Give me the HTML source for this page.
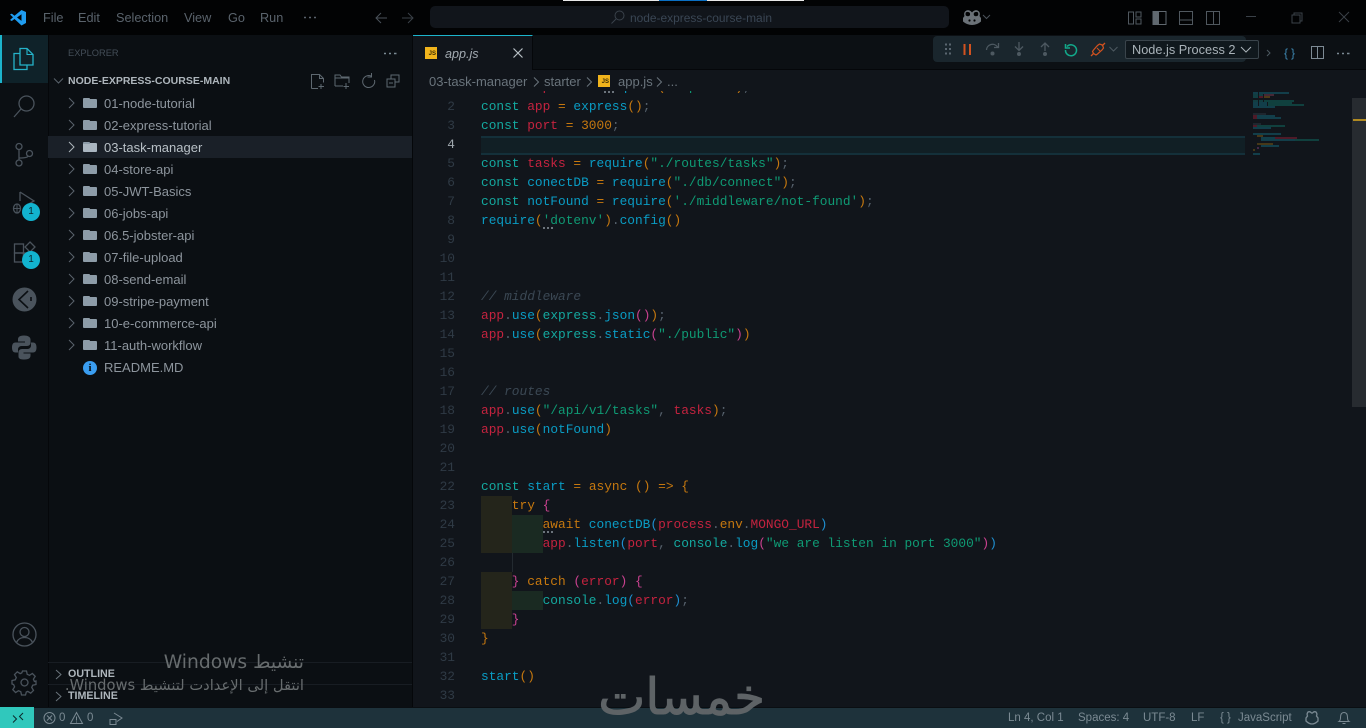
<!DOCTYPE html>
<html><head><meta charset="utf-8"><title>app.js</title>
<style>
*{margin:0;padding:0;box-sizing:border-box}
html,body{width:1366px;height:728px;overflow:hidden;background:#11151b;font-family:"Liberation Sans",sans-serif}
.a{position:absolute}
svg{position:absolute;overflow:visible;fill:none}
.tree{position:absolute;left:104px;font-size:13px;color:#8d959d;line-height:22px;height:22px;white-space:nowrap;margin-top:1px}
.fold{position:absolute;left:83px;width:14px;height:9px;background:#8d9ca8;border-radius:1px}
.fold:before{content:"";position:absolute;left:0;top:-1px;width:7px;height:2px;background:#8d9ca8;border-radius:1px 1px 0 0}
.ln{position:absolute;width:28px;left:427px;text-align:right;font:12.83px/19px "Liberation Mono",monospace;color:#2f3a45}
.c{position:absolute;left:481px;font:12.83px/19px "Liberation Mono",monospace;white-space:pre;color:#5a6570}
.k{color:#14a89f}.v{color:#c4233f}.f{color:#0a9cc4}.s{color:#0f9a74}.o{color:#c6780f}.m{color:#3b4854;font-style:italic}.p{color:#c9418f}.d{color:#56616c}.b{color:#1f8fd0}
.menu{position:absolute;top:10px;font-size:12.7px;color:#5a636c;line-height:16px}
.st{position:absolute;top:711px;font-size:11.5px;line-height:14px;color:#7b8a93;white-space:nowrap}
</style></head><body>
<!-- title bar -->
<div class="a" style="left:0;top:0;width:1366px;height:35px;background:#020304"></div>
<div class="a" style="left:563px;top:0;width:241px;height:1px;background:#e8e8e8"></div>
<div class="a" style="left:659px;top:0;width:48px;height:1px;background:#0a6fc2"></div>
<svg style="left:10px;top:9px" width="16" height="17" viewBox="0 0 16 17"><path d="M11.5 1L16 3v11l-4.500 2.500L4.500 10 1.800 12 0 11l3-2.700L0 5.500 1.800 4.600 4.500 6.800z" fill="#1f9cf0"/><path d="M11.500 5.200L7 8.500l4.500 3.400z" fill="#020304"/></svg>
<div class="menu" style="left:43px">File</div><div class="menu" style="left:78px">Edit</div><div class="menu" style="left:116px">Selection</div><div class="menu" style="left:184px">View</div><div class="menu" style="left:228px">Go</div><div class="menu" style="left:260px">Run</div>
<svg style="left:303px;top:16px" width="14" height="3"><path d="M1 1.500h2M6 1.500h2M11 1.500h2" stroke="#5a636c" stroke-width="1.400"/></svg>
<svg style="left:375px;top:11px" width="36" height="14" fill="none"><path d="M12 7H1M6 2L1 7l5 5" stroke="#4a525a"/><path d="M27 7h11M33 2l5 5-5 5" stroke="#3a4148"/></svg>
<div class="a" style="left:430px;top:6px;width:519px;height:22px;background:#11151b;border-radius:5px"></div>
<svg style="left:611px;top:10px" width="15" height="15"><circle cx="8.500" cy="5.500" r="4.500" stroke="#3a424b"/><path d="M5 9l-4.500 4.500" stroke="#3a424b"/></svg>
<div class="a" style="left:630px;top:10px;font-size:11.95px;line-height:16px;color:#3a4654">node-express-course-main</div>
<svg style="left:962px;top:9px" width="30" height="18"><path d="M3 2.500Q5.500 0 8.500 2q1 .7 1.500 1.500Q10.500 2.700 11.500 2q3-2 5.500.5 1.500 2 .5 4.500l1.500 2v3.500q-4 3.500-9 3.500t-9-3.500V9l1.500-2Q1.500 4.500 3 2.500z" fill="#6b7278"/><path d="M3.800 3.500q2-1.300 4 .3.700 1.700-.3 3-2 1-3.700-.3-.7-1.500 0-3zM12 3.800q2-1.600 4-.3.700 1.500 0 3-1.700 1.300-3.700.3-1-1.300-.3-3z" fill="#020304"/><circle cx="7.500" cy="11.500" r="1.100" fill="#020304"/><circle cx="12.500" cy="11.500" r="1.100" fill="#020304"/><path d="M21 6l3.500 3.500L28 6" stroke="#4a525a"/></svg>
<svg style="left:1128px;top:10px" width="78" height="16"><rect x=".5" y="2" width="5" height="12" stroke="#50585f"/><rect x="8" y="2" width="5" height="5" stroke="#50585f"/><rect x="8" y="9" width="5" height="5" stroke="#50585f"/>
<rect x="25" y="1.500" width="13" height="13" stroke="#60686f"/><rect x="25" y="1.500" width="6" height="13" fill="#60686f"/>
<rect x="51.500" y="1.500" width="13" height="13" stroke="#50585f"/><path d="M51.500 10h13" stroke="#50585f"/></svg>
<svg style="left:1206px;top:10px" width="15" height="16"><rect x=".5" y="1.500" width="13" height="13" stroke="#50585f"/><path d="M7.500 1.500v13" stroke="#50585f"/></svg>
<svg style="left:1246px;top:10px" width="110" height="16"><path d="M0 6.500h10" stroke="#3a4148"/><rect x="46" y="5" width="8" height="8" stroke="#3a4148"/><path d="M48 5V3h8v8h-2" stroke="#3a4148"/><path d="M93 2l10 10M103 2L93 12" stroke="#3a4148"/></svg>

<!-- activity bar -->
<div class="a" style="left:0;top:35px;width:48px;height:672px;background:#0b0f13"></div>
<div class="a" style="left:0;top:35px;width:48px;height:48px;background:#0f2229"></div>
<div class="a" style="left:0;top:35px;width:2px;height:48px;background:#1cb4cc"></div>
<svg style="left:13px;top:47px" width="22" height="25"><path d="M7 1.500h7l6 6v10.500H7z" stroke="#25b3c9" stroke-width="1.300"/><path d="M14 1.500v6h6" stroke="#25b3c9" stroke-width="1.100"/><path d="M7 6.500H1v16h13V18" stroke="#25b3c9" stroke-width="1.300"/></svg>
<svg style="left:13px;top:94px" width="23" height="25"><circle cx="13.500" cy="9.500" r="7.500" stroke="#4a535c" stroke-width="1.300"/><path d="M8 15L1 23" stroke="#4a535c" stroke-width="1.300"/></svg>
<svg style="left:14px;top:142px" width="21" height="25"><circle cx="5" cy="4.500" r="3" stroke="#4a535c" stroke-width="1.300"/><circle cx="5" cy="21" r="3" stroke="#4a535c" stroke-width="1.300"/><circle cx="15.500" cy="11.500" r="3" stroke="#4a535c" stroke-width="1.300"/><path d="M5 7.500V18M5 16q9 0 9-2" stroke="#4a535c" stroke-width="1.300"/></svg>
<svg style="left:12px;top:190px" width="26" height="26"><path d="M8 2v9M8 2l14 9-7 4" stroke="#4a535c" stroke-width="1.300"/><ellipse cx="5" cy="18.500" rx="3.500" ry="4.500" stroke="#4a535c" stroke-width="1.300"/><path d="M1.500 18.500h7M5 14v9" stroke="#4a535c"/></svg>
<div class="a" style="left:22px;top:203px;width:18px;height:18px;border-radius:50%;background:#12b3cf;color:#08262e;font-size:10px;line-height:18px;text-align:center">1</div>
<svg style="left:14px;top:241px" width="24" height="22"><rect x=".5" y="3" width="9" height="9" stroke="#4a535c" stroke-width="1.300"/><rect x=".5" y="12" width="9" height="9" stroke="#4a535c" stroke-width="1.300"/><rect x="9.500" y="12" width="9" height="9" stroke="#4a535c" stroke-width="1.300"/><path d="M16 1l5 5-5 5-5-5z" stroke="#4a535c" stroke-width="1.300"/></svg>
<div class="a" style="left:22px;top:251px;width:18px;height:18px;border-radius:50%;background:#12b3cf;color:#08262e;font-size:10px;line-height:18px;text-align:center">1</div>
<svg style="left:12px;top:287px" width="25" height="25"><circle cx="12.500" cy="12.500" r="12" fill="#4a535c"/><path d="M16 4L7 12.500 16 21" stroke="#0b0f13" stroke-width="1.600"/><path d="M19 10v4" stroke="#0b0f13" stroke-width="1.600"/></svg>
<svg style="left:12px;top:335px" width="25" height="25"><path d="M12 .5c-5 0-6 2-6 4v2h7v1H3.500C1 7.500 0 9.500 0 12.500s1 5 3.500 5H6v-3c0-2 1.500-3.500 3.500-3.500h5.500c2 0 3.500-1.500 3.500-3V4.500c0-2.500-2.500-4-6.500-4z" fill="#4a535c"/><path d="M12.500 24.500c5 0 6-2 6-4v-2h-7v-1H21c2.500 0 3.500-2 3.500-5s-1-5-3.500-5h-2v3c0 2-1.500 3.500-3.500 3.500H10c-2 0-3.500 1.500-3.500 3v4.500c0 2.500 2.500 3 6 3z" fill="#4a535c"/></svg>
<svg style="left:12px;top:622px" width="25" height="25"><circle cx="12.500" cy="12.500" r="11.500" stroke="#4a535c" stroke-width="1.300"/><circle cx="12.500" cy="10" r="4.500" stroke="#4a535c" stroke-width="1.300"/><path d="M4.500 20.500q2-5 8-5t8 5" stroke="#4a535c" stroke-width="1.300"/></svg>
<svg style="left:12px;top:670px" width="25" height="25"><circle cx="12.500" cy="12.500" r="3.500" stroke="#4a535c" stroke-width="1.300"/><path d="M10.500 1h4l.7 3.300 2.300 1 2.900-1.800 2.800 2.800-1.800 2.900 1 2.300L24 11v3.500l-3.300.7-1 2.300 1.800 2.900-2.800 2.800-2.900-1.800-1.500.6-.8 3h-4l-.7-3.300-2.300-1-2.900 1.800-2.800-2.800 1.800-2.900-1-2.300L0 14v-3.500l3.300-.7 1-2.300L2.500 4.600l2.800-2.800 2.900 1.800 1.600-.7z" stroke="#4a535c" stroke-width="1.300"/></svg>

<!-- sidebar -->
<div class="a" style="left:48px;top:35px;width:365px;height:672px;background:#0b0f13;border-left:1px solid #05070a;border-right:1px solid #05070a"></div>
<div class="a" style="left:68px;top:46px;font-size:9.3px;line-height:14px;color:#434d57">EXPLORER</div>
<svg style="left:384px;top:52px" width="14" height="3"><path d="M0 1.500h2M5 1.500h2M10 1.500h2.500" stroke="#7b8a93" stroke-width="1.400"/></svg>
<svg style="left:53px;top:77px" width="12" height="8"><path d="M1 1.500l4.500 4.500L10 1.500" stroke="#5a636c"/></svg>
<div class="a" style="left:68px;top:73px;font-size:10.5px;line-height:16px;font-weight:bold;color:#aeb6bc;white-space:nowrap">NODE-EXPRESS-COURSE-MAIN</div>
<svg style="left:311px;top:73px" width="88" height="17"><g stroke="#5e6870"><path d="M.5 15.500V1.500h8l4 4v4M8.500 1.500v4h4M7 15.500H.5M10 11v5M7.500 13.500h5.500"/><path d="M24 13V2h5l1.500 2H38v6M24 13h8M35 10v6M32.500 13.500h5.500M24 5h14"/><path d="M60 3a6 6 0 1 0 3.500 4M60.500 0v4h-4" /><rect x="80" y="2" width="8" height="7"/><rect x="76" y="6" width="8" height="8" fill="#0b0f13"/><path d="M78 10h4"/></g></svg>
<div class="a" style="left:48px;top:136px;width:364px;height:22px;background:#1a2028"></div>
<svg style="left:68px;top:92px" width="8" height="264"><g stroke="#5a636c" fill="none"><path d="M1 6l5 5-5 5"/><path d="M1 28l5 5-5 5"/><path d="M1 50l5 5-5 5" stroke="#aeb6bc"/><path d="M1 72l5 5-5 5"/><path d="M1 94l5 5-5 5"/><path d="M1 116l5 5-5 5"/><path d="M1 138l5 5-5 5"/><path d="M1 160l5 5-5 5"/><path d="M1 182l5 5-5 5"/><path d="M1 204l5 5-5 5"/><path d="M1 226l5 5-5 5"/><path d="M1 248l5 5-5 5"/></g></svg>
<div class="fold" style="top:99px"></div><div class="tree" style="top:92px">01-node-tutorial</div>
<div class="fold" style="top:121px"></div><div class="tree" style="top:114px">02-express-tutorial</div>
<div class="fold" style="top:143px;background:#aab6c0"></div><div class="tree" style="top:136px;color:#b8c0c6">03-task-manager</div>
<div class="fold" style="top:165px"></div><div class="tree" style="top:158px">04-store-api</div>
<div class="fold" style="top:187px"></div><div class="tree" style="top:180px">05-JWT-Basics</div>
<div class="fold" style="top:209px"></div><div class="tree" style="top:202px">06-jobs-api</div>
<div class="fold" style="top:231px"></div><div class="tree" style="top:224px">06.5-jobster-api</div>
<div class="fold" style="top:253px"></div><div class="tree" style="top:246px">07-file-upload</div>
<div class="fold" style="top:275px"></div><div class="tree" style="top:268px">08-send-email</div>
<div class="fold" style="top:297px"></div><div class="tree" style="top:290px">09-stripe-payment</div>
<div class="fold" style="top:319px"></div><div class="tree" style="top:312px">10-e-commerce-api</div>
<div class="fold" style="top:341px"></div><div class="tree" style="top:334px">11-auth-workflow</div>
<div class="a" style="left:83px;top:361px;width:14px;height:14px;border-radius:50%;background:#3a9df0;color:#0b0f13;font:bold 11px/14px 'Liberation Serif',serif;text-align:center">i</div><div class="tree" style="top:356px">README.MD</div>
<div class="a" style="left:48px;top:662px;width:364px;height:1px;background:#181d23"></div>
<div class="a" style="left:48px;top:684px;width:364px;height:1px;background:#181d23"></div>
<svg style="left:55px;top:669px" width="8" height="34"><path d="M1 1l5 4.500L1 10M1 23l5 4.500L1 32" stroke="#6a747c"/></svg>
<div class="a" style="left:68px;top:667px;font-size:10.7px;line-height:14px;font-weight:bold;color:#aeb6bc">OUTLINE</div>
<div class="a" style="left:68px;top:689px;font-size:10.7px;line-height:14px;font-weight:bold;color:#aeb6bc">TIMELINE</div>

<!-- tabs -->
<div class="a" style="left:413px;top:35px;width:953px;height:35px;background:#0c1014;border-bottom:1px solid #05070a"></div>
<div class="a" style="left:413px;top:35px;width:120px;height:35px;background:#11151b;border-top:1px solid #1cb4cc;border-right:1px solid #05070a"></div>
<div class="a" style="left:425px;top:47px;width:12px;height:12px;background:#f1b41c;color:#3a2c05;font:bold 6px/15px 'Liberation Sans',sans-serif;text-align:right;padding-right:1px">JS</div>
<div class="a" style="left:445px;top:46px;font-size:12.600px;line-height:16px;font-style:italic;color:#a3abb2">app.js</div>
<svg style="left:513px;top:48px" width="10" height="10"><path d="M.5.500l9 9M9.500.500l-9 9" stroke="#b8c0c6" stroke-width="1.200"/></svg>
<!-- debug toolbar -->
<div class="a" style="left:933px;top:36px;width:313px;height:26px;background:#1a262d;border-radius:4px"></div>
<svg style="left:944px;top:44px" width="8" height="11"><path d="M1 .500h6M1 5h6M1 9.500h6" stroke="#5a6670" stroke-width="2" stroke-dasharray="2 2"/></svg>
<svg style="left:963px;top:44px" width="9" height="11"><path d="M1.500 0v11M7 0v11" stroke="#d2521f" stroke-width="2"/></svg>
<svg style="left:985px;top:42px" width="16" height="15"><path d="M1.500 8a6 6 0 0 1 11-3M13.500 1v4.500H9" stroke="#4d5961" stroke-width="1.300"/><circle cx="7.500" cy="11.500" r="2" fill="#4d5961"/></svg>
<svg style="left:1012px;top:42px" width="14" height="15"><path d="M7 0v8M3 4.500L7 8.500l4-4" stroke="#4d5961" stroke-width="1.300"/><circle cx="7" cy="12" r="2" fill="#4d5961"/></svg>
<svg style="left:1038px;top:42px" width="14" height="15"><path d="M7 9V1M3 5l4-4 4 4" stroke="#4d5961" stroke-width="1.300"/><circle cx="7" cy="12" r="2" fill="#4d5961"/></svg>
<svg style="left:1064px;top:43px" width="14" height="13"><path d="M3 3.500a5.500 5.500 0 1 1-1.500 3.500M1.500 1v4H6" stroke="#12a98a" stroke-width="1.500"/></svg>
<svg style="left:1090px;top:42px" width="16" height="15"><path d="M1 14l3-3M12 4l3-3" stroke="#d2521f" stroke-width="1.300"/><path d="M3.500 8l4-4.500 2-1.500 3 1 1 3-1.500 2-4.500 4-1.500 1-2.500-1.500-1-2z" stroke="#d2521f" stroke-width="1.200"/><path d="M7 6l3 3" stroke="#d2521f"/></svg>
<svg style="left:1109px;top:46px" width="10" height="7"><path d="M.500 1l4 4 4-4" stroke="#4d5961"/></svg>
<div class="a" style="left:1125px;top:40px;width:134px;height:19px;background:#10181d;border:1px solid #3a444b;border-radius:2px"></div>
<div class="a" style="left:1132px;top:42px;font-size:12.75px;line-height:16px;color:#a9b2b8;white-space:nowrap">Node.js Process 2</div>
<svg style="left:1240px;top:46px" width="12" height="7"><path d="M1 1l5 5 5-5" stroke="#a9b2b8"/></svg>
<svg style="left:1266px;top:49px" width="6" height="8"><path d="M1 1l3 3-3 3" stroke="#4d5961"/></svg>
<div class="a" style="left:1284px;top:45px;font:12px/16px 'Liberation Sans',sans-serif;color:#3d86b0;letter-spacing:3px">{}</div>
<svg style="left:1311px;top:46px" width="14" height="13"><rect x=".5" y=".5" width="12" height="12" stroke="#7d8a94"/><path d="M6.500.5v12" stroke="#7d8a94"/></svg>
<svg style="left:1337px;top:52px" width="14" height="3"><path d="M0 1.500h2M5 1.500h2M10 1.500h2.500" stroke="#7b8a93" stroke-width="1.400"/></svg>
<!-- breadcrumb -->
<div class="a" style="left:429px;top:74px;font-size:13px;line-height:16px;color:#6a747c;white-space:nowrap">03-task-manager</div>
<svg style="left:533px;top:77px" width="8" height="10"><path d="M1 .500l4.500 4.500L1 9.500" stroke="#6a747c"/></svg>
<div class="a" style="left:544px;top:74px;font-size:13px;line-height:16px;color:#6a747c">starter</div>
<svg style="left:586px;top:77px" width="8" height="10"><path d="M1 .500l4.500 4.500L1 9.500" stroke="#6a747c"/></svg>
<div class="a" style="left:598px;top:75px;width:12px;height:12px;background:#f1b41c;color:#3a2c05;font:bold 6px/15px 'Liberation Sans',sans-serif;text-align:right;padding-right:1px">JS</div>
<div class="a" style="left:618px;top:74px;font-size:13px;line-height:16px;color:#6a747c">app.js</div>
<svg style="left:656px;top:77px" width="8" height="10"><path d="M1 .500l4.500 4.500L1 9.500" stroke="#6a747c"/></svg>
<div class="a" style="left:667px;top:74px;font-size:13px;line-height:16px;color:#6a747c">...</div>

<!-- editor -->
<div class="a" style="left:481px;top:136px;width:764px;height:19px;background:#111f25;border-top:2px solid #14303a;border-bottom:2px solid #14303a"></div>
<!-- indent highlights -->
<div class="a" style="left:481px;top:496px;width:31px;height:57px;background:#24251b"></div>
<div class="a" style="left:512px;top:515px;width:31px;height:38px;background:#1a2a22"></div>
<div class="a" style="left:481px;top:572px;width:31px;height:57px;background:#24251b"></div>
<div class="a" style="left:512px;top:591px;width:31px;height:19px;background:#1a2a22"></div>
<div class="c" style="top:78px;height:15px;overflow:hidden;left:481px;clip-path:inset(13px 0 0 0)"><span class="k">const</span> <span class="v">express</span> <span class="o">=</span> <span class="f">require</span><span class="o">(</span><span class="s">"express"</span><span class="o">)</span><span class="d">;</span></div>
<svg style="left:604px;top:91px" width="10" height="2"><path d="M0 1h10" stroke="#8a949c" stroke-width="1.400" stroke-dasharray="2 2"/></svg>
<div class="ln" style="top:97px">2</div><div class="c" style="top:97px"><span class="k">const</span> <span class="v">app</span> <span class="o">=</span> <span class="f">express</span><span class="o">()</span><span class="d">;</span></div>
<div class="ln" style="top:116px">3</div><div class="c" style="top:116px"><span class="k">const</span> <span class="v">port</span> <span class="o">=</span> <span class="o">3000</span><span class="d">;</span></div>
<div class="ln" style="top:135px;color:#a0a8ae">4</div>
<div class="ln" style="top:154px">5</div><div class="c" style="top:154px"><span class="k">const</span> <span class="v">tasks</span> <span class="o">=</span> <span class="f">require</span><span class="o">(</span><span class="s">"./routes/tasks"</span><span class="o">)</span><span class="d">;</span></div>
<div class="ln" style="top:173px">6</div><div class="c" style="top:173px"><span class="k">const</span> <span class="f">conectDB</span> <span class="o">=</span> <span class="f">require</span><span class="o">(</span><span class="s">"./db/connect"</span><span class="o">)</span><span class="d">;</span></div>
<div class="ln" style="top:192px">7</div><div class="c" style="top:192px"><span class="k">const</span> <span class="f">notFound</span> <span class="o">=</span> <span class="f">require</span><span class="o">(</span><span class="s">'./middleware/not-found'</span><span class="o">)</span><span class="d">;</span></div>
<div class="ln" style="top:211px">8</div><div class="c" style="top:211px"><span class="f">require</span><span class="o">(</span><span class="s">'dotenv'</span><span class="o">)</span><span class="d">.</span><span class="f">config</span><span class="o">()</span></div>
<svg style="left:543px;top:227px" width="10" height="2"><path d="M0 1h10" stroke="#8a949c" stroke-width="1.400" stroke-dasharray="2 2"/></svg>
<div class="ln" style="top:230px">9</div>
<div class="ln" style="top:249px">10</div>
<div class="ln" style="top:268px">11</div>
<div class="ln" style="top:287px">12</div><div class="c m" style="top:287px">// middleware</div>
<div class="ln" style="top:306px">13</div><div class="c" style="top:306px"><span class="v">app</span><span class="d">.</span><span class="f">use</span><span class="o">(</span><span class="k">express</span><span class="d">.</span><span class="f">json</span><span class="p">()</span><span class="o">)</span><span class="d">;</span></div>
<div class="ln" style="top:325px">14</div><div class="c" style="top:325px"><span class="v">app</span><span class="d">.</span><span class="f">use</span><span class="o">(</span><span class="k">express</span><span class="d">.</span><span class="f">static</span><span class="p">(</span><span class="s">"./public"</span><span class="p">)</span><span class="o">)</span></div>
<div class="ln" style="top:344px">15</div>
<div class="ln" style="top:363px">16</div>
<div class="ln" style="top:382px">17</div><div class="c m" style="top:382px">// routes</div>
<div class="ln" style="top:401px">18</div><div class="c" style="top:401px"><span class="v">app</span><span class="d">.</span><span class="f">use</span><span class="o">(</span><span class="s">"/api/v1/tasks"</span><span class="d">,</span> <span class="v">tasks</span><span class="o">)</span><span class="d">;</span></div>
<div class="ln" style="top:420px">19</div><div class="c" style="top:420px"><span class="v">app</span><span class="d">.</span><span class="f">use</span><span class="o">(</span><span class="f">notFound</span><span class="o">)</span></div>
<div class="ln" style="top:439px">20</div>
<div class="ln" style="top:458px">21</div>
<div class="ln" style="top:477px">22</div><div class="c" style="top:477px"><span class="k">const</span> <span class="f">start</span> <span class="o">=</span> <span class="o">async</span> <span class="o">()</span> <span class="o">=&gt;</span> <span class="o">{</span></div>
<div class="ln" style="top:496px">23</div><div class="c" style="top:496px">    <span class="o">try</span> <span class="p">{</span></div>
<div class="ln" style="top:515px">24</div><div class="c" style="top:515px">        <span class="o">await</span> <span class="f">conectDB</span><span class="b">(</span><span class="v">process</span><span class="d">.</span><span class="o">env</span><span class="d">.</span><span class="v">MONGO_URL</span><span class="b">)</span></div>
<svg style="left:543px;top:531px" width="10" height="2"><path d="M0 1h10" stroke="#8a949c" stroke-width="1.400" stroke-dasharray="2 2"/></svg>
<div class="ln" style="top:534px">25</div><div class="c" style="top:534px">        <span class="v">app</span><span class="d">.</span><span class="f">listen</span><span class="b">(</span><span class="v">port</span><span class="d">,</span> <span class="k">console</span><span class="d">.</span><span class="f">log</span><span class="p">(</span><span class="s">"we are listen in port 3000"</span><span class="p">)</span><span class="b">)</span></div>
<div class="ln" style="top:553px">26</div>
<div class="ln" style="top:572px">27</div><div class="c" style="top:572px">    <span class="p">}</span> <span class="o">catch</span> <span class="p">(</span><span class="v">error</span><span class="p">)</span> <span class="p">{</span></div>
<div class="ln" style="top:591px">28</div><div class="c" style="top:591px">        <span class="k">console</span><span class="d">.</span><span class="f">log</span><span class="b">(</span><span class="v">error</span><span class="b">)</span><span class="d">;</span></div>
<div class="ln" style="top:610px">29</div><div class="c" style="top:610px">    <span class="p">}</span></div>
<div class="ln" style="top:629px">30</div><div class="c" style="top:629px"><span class="o">}</span></div>
<div class="ln" style="top:648px">31</div>
<div class="ln" style="top:667px">32</div><div class="c" style="top:667px"><span class="f">start</span><span class="o">()</span></div>
<div class="ln" style="top:686px">33</div>
<div class="a" style="left:512px;top:553px;width:1px;height:19px;background:#232a30"></div>
<!-- minimap -->
<svg style="left:1252px;top:92px" width="75" height="66"><g stroke-width="1">
<path d="M1 1h5" stroke="#14687a"/><path d="M7 1h30" stroke="#14687a"/>
<path d="M1 3h5M7 3h4" stroke="#14686a"/><path d="M12 3h10" stroke="#7a3a50"/>
<path d="M1 5h5" stroke="#14686a"/><path d="M7 5h4" stroke="#8a1f35"/><path d="M12 5h6" stroke="#8a6015"/>
<path d="M1 9h5M7 9h4" stroke="#14686a"/><path d="M12 9h30" stroke="#0f6a60"/>
<path d="M1 11h5M7 11h8" stroke="#14687a"/><path d="M16 11h24" stroke="#0f6a60"/>
<path d="M1 13h5M7 13h8" stroke="#14687a"/><path d="M16 13h36" stroke="#0f6a60"/>
<path d="M1 15h22" stroke="#14687a"/>
<path d="M1 22h13" stroke="#2a3640"/>
<path d="M1 24h4" stroke="#8a1f35"/><path d="M5 24h18" stroke="#14687a"/>
<path d="M1 26h4" stroke="#8a1f35"/><path d="M5 26h24" stroke="#14687a"/>
<path d="M1 32h8" stroke="#2a3640"/>
<path d="M1 34h4" stroke="#8a1f35"/><path d="M5 34h28" stroke="#0f6a60"/>
<path d="M1 36h18" stroke="#14687a"/>
<path d="M1 42h28" stroke="#14687a"/>
<path d="M5 44h6" stroke="#7a5a15"/>
<path d="M9 46h14" stroke="#14687a"/><path d="M23 46h22" stroke="#8a1f35"/>
<path d="M9 48h34" stroke="#14687a"/><path d="M43 48h24" stroke="#0f6a60"/>
<path d="M5 52h16" stroke="#7a5a15"/><path d="M9 54h18" stroke="#14687a"/>
<path d="M5 56h2" stroke="#7a3a70"/><path d="M1 58h2" stroke="#7a5a15"/><path d="M1 62h7" stroke="#14687a"/></g></svg>
<div class="a" style="left:1352px;top:98px;width:14px;height:309px;background:#272b30"></div>
<div class="a" style="left:1353px;top:119px;width:13px;height:2px;background:#b08a22"></div>

<!-- status bar -->
<div class="a" style="left:0;top:707px;width:1366px;height:21px;background:#1e323b;border-top:1px solid #0a0e12"></div>
<div class="a" style="left:0;top:707px;width:34px;height:21px;background:#30c8bc"></div>
<svg style="left:12px;top:712px" width="12" height="12"><path d="M1 3.500l3.500 3.500L1 10.500M11 1L7.500 4.500 11 8" stroke="#0b2a2c"/></svg>
<svg style="left:43px;top:711px" width="40" height="14"><circle cx="6.500" cy="7" r="5.500" stroke="#7b8a93"/><path d="M4 4.500l5 5M9 4.500l-5 5" stroke="#7b8a93"/><path d="M33.500 1.500L39.500 12.500H27.500zM33.500 5.500v4M33.500 10.500v1" stroke="#7b8a93"/></svg>
<div class="st" style="left:59px">0</div><div class="st" style="left:87px">0</div>
<svg style="left:109px;top:711px" width="14" height="14"><path d="M5 2l8 5-5 3.500" stroke="#7b8a93"/><rect x="1" y="8.500" width="6" height="5" stroke="#7b8a93"/></svg>
<div class="st" style="left:1008px">Ln 4, Col 1</div>
<div class="st" style="left:1078px">Spaces: 4</div>
<div class="st" style="left:1143px">UTF-8</div>
<div class="st" style="left:1191px">LF</div>
<div class="st" style="left:1220px">{ }</div>
<div class="st" style="left:1238px">JavaScript</div>
<svg style="left:1305px;top:711px" width="14" height="13"><path d="M3 1q2-1 3.500 1h1Q9 0 11 1q1.500 2 .5 4l1.500 2v3q-3 3-6 3t-6-3V7l1.500-2Q1.500 3 3 1z" stroke="#7b8a93" stroke-width="1.300"/></svg>
<svg style="left:1338px;top:711px" width="12" height="14"><path d="M1 10.500q1.500-1 1.500-4 0-5 3.500-5t3.500 5q0 3 1.500 4zM4.500 12.500h3" stroke="#7b8a93"/></svg>

<!-- watermark -->
<div class="a" style="left:765px;top:667px;width:0;font:normal 50px/60px 'DejaVu Sans',sans-serif;-webkit-text-stroke:1px #5e6366;color:#5e6366;direction:rtl;white-space:nowrap">خمسات</div>
<!-- windows activation -->
<div class="a" style="left:60px;top:651px;width:244px;text-align:right;direction:rtl;font:18.7px/24px 'DejaVu Sans',sans-serif;color:#676c6e;white-space:nowrap">تنشيط Windows</div>
<div class="a" style="left:60px;top:677px;width:244px;text-align:right;direction:rtl;font:14.7px/18px 'DejaVu Sans',sans-serif;color:#676c6e;white-space:nowrap">انتقل إلى الإعدادت لتنشيط Windows.</div>
</body></html>
